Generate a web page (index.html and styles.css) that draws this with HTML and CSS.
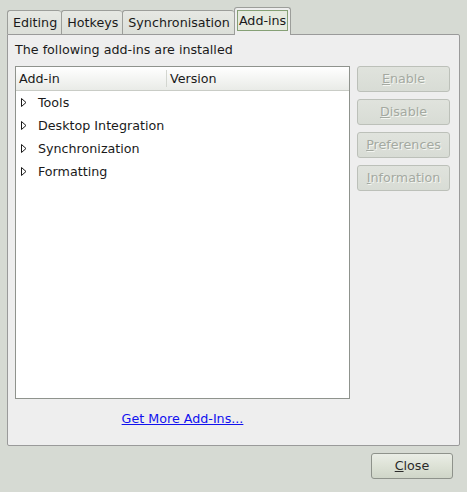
FILE: index.html
```html
<!DOCTYPE html>
<html>
<head>
<meta charset="utf-8">
<link rel="stylesheet" href="styles.css">
</head>
<body>
<div class="window">
  <div class="tabs">
    <div class="tab">Editing</div>
    <div class="tab">Hotkeys</div>
    <div class="tab">Synchronisation</div>
    <div class="tab active"><span class="focus">Add-ins</span></div>
  </div>
  <div class="panel">
    <div class="label">The following add-ins are installed</div>
    <div class="content">
      <div class="listcol">
        <div class="listbox">
          <div class="header">
            <div class="hcell first">Add-in</div>
            <div class="hcell">Version</div>
          </div>
          <div class="row"><svg class="tri" width="8" height="11" viewBox="0 0 8 11"><path d="M1.5 1.5 L1.5 9.5 L6 5.5 Z" fill="#ffffff" stroke="#1a1a1a" stroke-width="1"/></svg><span class="rtext">Tools</span></div>
          <div class="row"><svg class="tri" width="8" height="11" viewBox="0 0 8 11"><path d="M1.5 1.5 L1.5 9.5 L6 5.5 Z" fill="#ffffff" stroke="#1a1a1a" stroke-width="1"/></svg><span class="rtext">Desktop Integration</span></div>
          <div class="row"><svg class="tri" width="8" height="11" viewBox="0 0 8 11"><path d="M1.5 1.5 L1.5 9.5 L6 5.5 Z" fill="#ffffff" stroke="#1a1a1a" stroke-width="1"/></svg><span class="rtext">Synchronization</span></div>
          <div class="row"><svg class="tri" width="8" height="11" viewBox="0 0 8 11"><path d="M1.5 1.5 L1.5 9.5 L6 5.5 Z" fill="#ffffff" stroke="#1a1a1a" stroke-width="1"/></svg><span class="rtext">Formatting</span></div>
        </div>
        <div class="linkrow"><a class="link" href="#">Get More Add-Ins...</a></div>
      </div>
      <div class="buttons">
        <div class="btn"><u>E</u>nable</div>
        <div class="btn"><u>D</u>isable</div>
        <div class="btn"><u>P</u>references</div>
        <div class="btn"><u>I</u>nformation</div>
      </div>
    </div>
  </div>
  <div class="footer">
    <div class="close"><u>C</u>lose</div>
  </div>
</div>
</body>
</html>
```

FILE: styles.css
```css
html, body {
  margin: 0;
  padding: 0;
}
body {
  background: #d6dad3;
  font-family: "DejaVu Sans", sans-serif;
  font-size: 12.7px;
  color: #1a1a1a;
  width: 467px;
  height: 492px;
  overflow: hidden;
}
.window {
  padding: 7px 7px 0 7px;
}
.tabs {
  display: flex;
  align-items: flex-end;
  height: 27px;
  position: relative;
  z-index: 2;
}
.tab {
  height: 23px;
  line-height: 23px;
  padding: 0 4px 0 5px;
  border: 1px solid #9c9e9a;
  border-bottom: none;
  border-right: none;
  border-radius: 3px 3px 0 0;
  background: linear-gradient(#e6e8e3, #dcdfd9);
  color: #1a1a1a;
}
.tab.active {
  height: 27px;
  margin-bottom: -1px;
  padding: 0 2px;
  border-right: 1px solid #9c9e9a;
  background: #eeeeee;
  display: flex;
  align-items: center;
}
.focus {
  display: block;
  height: 19px;
  line-height: 19px;
  padding: 0 1px;
  border: 1px solid #86a076;
  background: #e6eadf;
  margin-top: -2px;
}
.panel {
  background: #eeeeee;
  border: 1px solid #9a9a9a;
  border-radius: 0 2px 2px 2px;
  padding: 6px 9px 17px 7px;
  height: 387px;
  position: relative;
  z-index: 1;
}
.label {
  line-height: 17px;
  height: 17px;
  margin-bottom: 8px;
}
.content {
  display: flex;
  gap: 7px;
}
.listcol {
  display: flex;
  flex-direction: column;
  width: 335px;
}
.listbox {
  height: 331px;
  border: 1px solid #8f938d;
  background: #ffffff;
}
.header {
  display: flex;
  height: 23px;
  background: linear-gradient(#ffffff, #e9ebe7);
  border-bottom: 1px solid #c9ccc6;
}
.hcell {
  line-height: 23px;
  padding-left: 3px;
  color: #1a1a1a;
}
.hcell.first {
  width: 147px;
  border-right: 1px solid #d3d6d0;
  margin: 3px 0;
  line-height: 17px;
}
.row {
  display: flex;
  align-items: center;
  height: 23px;
}
.tri {
  display: block;
  margin-left: 4px;
}
.rtext {
  margin-left: 10px;
}
.linkrow {
  text-align: center;
  margin-top: 11px;
  line-height: 17px;
}
.link {
  color: #1111ee;
  text-decoration: underline;
}
.buttons {
  display: flex;
  flex-direction: column;
  gap: 7px;
  width: 93px;
}
.btn {
  height: 24px;
  line-height: 24px;
  text-align: center;
  border: 1px solid #bcc0b9;
  border-radius: 3px;
  background: linear-gradient(#e0e3dd, #d8dcd5);
  color: #a4a9a1;
  text-shadow: 1px 1px 0 #f4f6f2;
}
.footer {
  display: flex;
  justify-content: flex-end;
  padding: 7px 7px 0 0;
}
.close {
  width: 80px;
  height: 24px;
  line-height: 24px;
  text-align: center;
  border: 1px solid #8e928b;
  border-radius: 3px;
  background: linear-gradient(#eaede6, #dde2d6 50%, #cfd5c8);
  color: #2a2a2a;
}
```
